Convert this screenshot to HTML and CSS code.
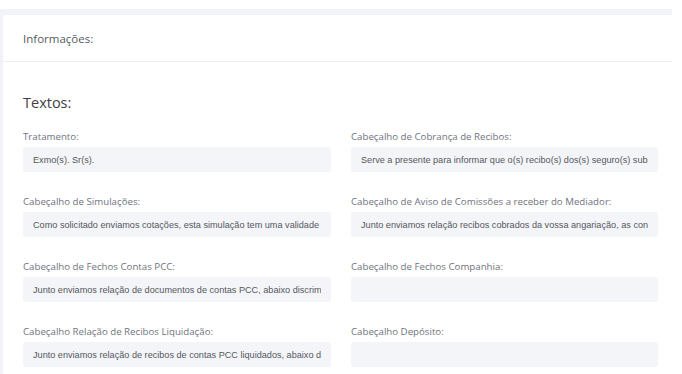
FILE: index.html
```html
<!DOCTYPE html>
<html lang="pt">
<head>
<meta charset="utf-8">
<link rel="stylesheet" href="styles.css">
</head>
<body>
<div class="page">
  <div class="card">
    <div class="card-head"><span class="card-title">Informações:</span></div>
    <div class="card-body">
      <h3 class="section-title">Textos:</h3>
      <div class="grid">
        <div class="field">
          <label class="label">Tratamento:</label>
          <input class="input" type="text" readonly value="Exmo(s). Sr(s).">
        </div>
        <div class="field">
          <label class="label">Cabeçalho de Cobrança de Recibos:</label>
          <input class="input" type="text" readonly value="Serve a presente para informar que o(s) recibo(s) dos(s) seguro(s) subscrito(s) por V. Exa.">
        </div>
        <div class="field">
          <label class="label">Cabeçalho de Simulações:</label>
          <input class="input" type="text" readonly value="Como solicitado enviamos cotações, esta simulação tem uma validade de 30 dias.">
        </div>
        <div class="field">
          <label class="label">Cabeçalho de Aviso de Comissões a receber do Mediador:</label>
          <input class="input" type="text" readonly value="Junto enviamos relação recibos cobrados da vossa angariação, as condições acordadas.">
        </div>
        <div class="field">
          <label class="label">Cabeçalho de Fechos Contas PCC:</label>
          <input class="input" type="text" readonly value="Junto enviamos relação de documentos de contas PCC, abaixo discriminados.">
        </div>
        <div class="field">
          <label class="label">Cabeçalho de Fechos Companhia:</label>
          <input class="input" type="text" readonly value="">
        </div>
        <div class="field">
          <label class="label">Cabeçalho Relação de Recibos Liquidação:</label>
          <input class="input" type="text" readonly value="Junto enviamos relação de recibos de contas PCC liquidados, abaixo discriminados.">
        </div>
        <div class="field">
          <label class="label">Cabeçalho Depósito:</label>
          <input class="input" type="text" readonly value="">
        </div>
      </div>
    </div>
  </div>
</div>
</body>
</html>
```
FILE: styles.css
```css
html, body {
  margin: 0;
  padding: 0;
  background: #ffffff;
}
body {
  font-family: "Open Sans", "Noto Sans", sans-serif;
  color: #575962;
}
.page {
  margin-top: 9px;
  width: 672px;
  height: 365px;
  box-sizing: border-box;
  background: #f2f3f8;
  padding: 6px 0 0 3px;
  overflow: hidden;
}
.card {
  background: #ffffff;
  height: 100%;
}
.card-head {
  height: 47px;
  box-sizing: border-box;
  display: flex;
  align-items: center;
  padding: 0 20px;
  border-bottom: 1px solid #ebedf2;
}
.card-title {
  font-size: 11.5px;
  font-weight: 500;
  color: #575962;
}
.card-body {
  padding: 31px 14px 0 20px;
}
.section-title {
  margin: 0 0 17px 0;
  font-size: 14.5px;
  line-height: 20px;
  font-weight: 400;
  color: #3f4047;
}
.grid {
  display: grid;
  grid-template-columns: 308px 307px;
  column-gap: 20px;
  row-gap: 23px;
}
.field {
  display: flex;
  flex-direction: column;
}
.label {
  font-size: 9.7px;
  line-height: 14px;
  color: #70737e;
  margin-bottom: 3px;
}
.input {
  height: 25px;
  box-sizing: border-box;
  border: none;
  outline: none;
  border-radius: 3px;
  background: #f4f5f8;
  padding: 0 10px;
  margin: 0;
  font-family: "Liberation Sans", Arial, sans-serif;
  font-size: 9.15px;
  color: #55575f;
  width: 100%;
}
```
